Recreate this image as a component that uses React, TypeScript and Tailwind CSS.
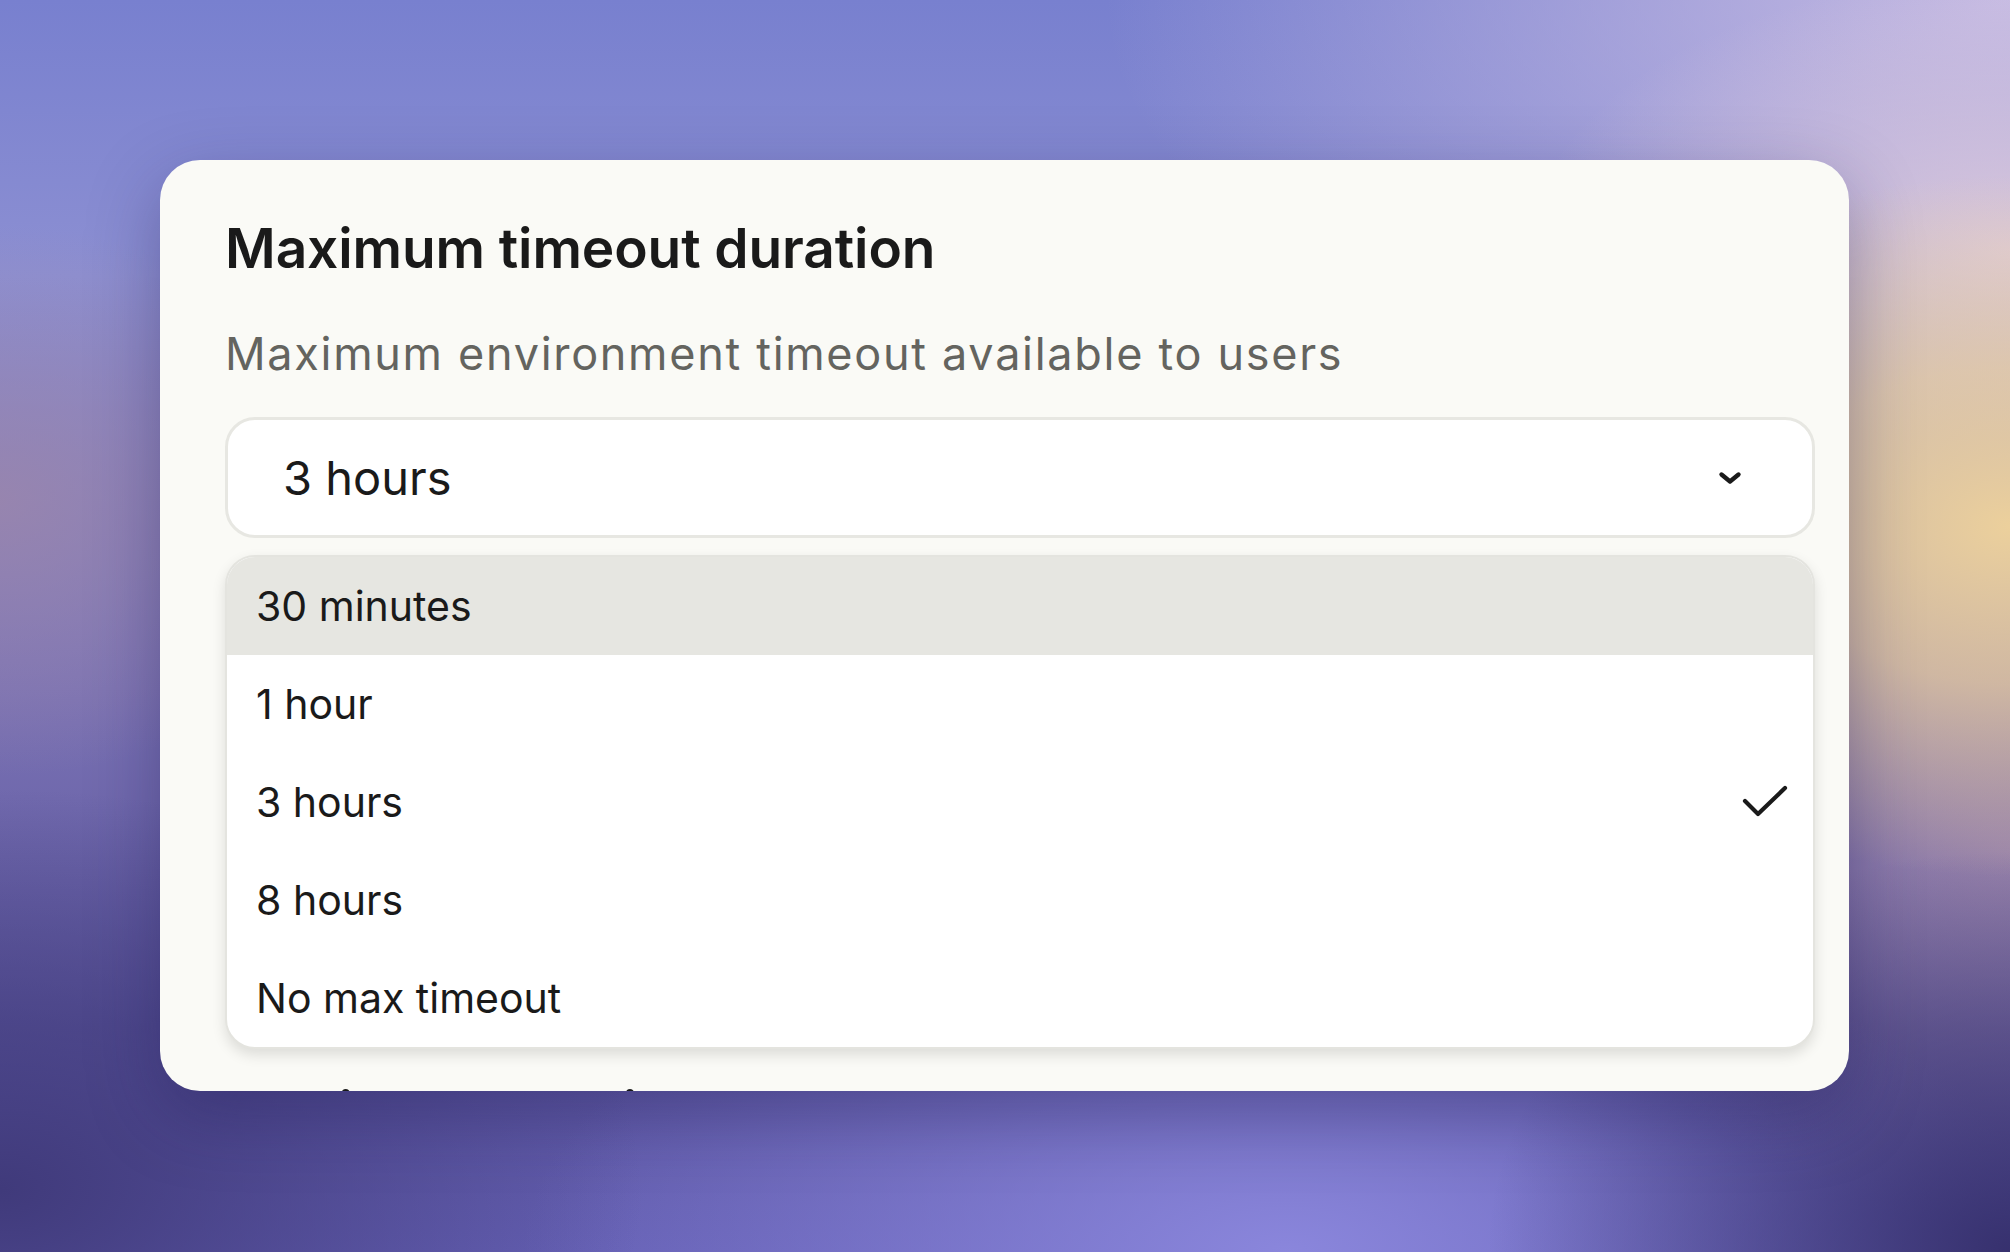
import React from "react";

const options = ["30 minutes", "1 hour", "3 hours", "8 hours", "No max timeout"];

function Chevron() {
  return (
    <svg width="26" height="16" viewBox="0 0 26 16" fill="none">
      <path d="M4.5 4.5 L13 11.5 L21.5 4.5" stroke="#1a1a1a" strokeWidth="4.4" strokeLinecap="round" strokeLinejoin="round" />
    </svg>
  );
}

function Check() {
  return (
    <svg width="48" height="38" viewBox="0 0 48 38" fill="none">
      <path d="M4 18 L17 31 L44 5" stroke="#1a1a1a" strokeWidth="4.2" strokeLinecap="round" strokeLinejoin="round" />
    </svg>
  );
}

export default function App() {
  return (
    <div
      className="relative w-[2010px] h-[1252px] overflow-hidden pt-[160px] pl-[160px] bg-[radial-gradient(ellipse_26%_28%_at_100%_42%,rgba(236,208,156,1)_0%,rgba(236,208,156,0.7)_45%,rgba(236,208,156,0)_100%),radial-gradient(ellipse_24%_22%_at_100%_20%,rgba(224,204,220,0.9)_0%,rgba(224,204,220,0)_100%),radial-gradient(ellipse_45%_35%_at_100%_0%,rgba(202,190,228,0.95)_0%,rgba(202,190,228,0)_100%),radial-gradient(ellipse_32%_32%_at_0%_95%,rgba(62,56,120,0.95)_0%,rgba(62,56,120,0)_100%),radial-gradient(ellipse_26%_32%_at_100%_100%,rgba(52,46,106,0.95)_0%,rgba(52,46,106,0)_100%),radial-gradient(ellipse_38%_28%_at_64%_100%,rgba(140,136,222,0.95)_0%,rgba(140,136,222,0)_100%),radial-gradient(ellipse_18%_22%_at_0%_40%,rgba(156,134,170,0.8)_0%,rgba(156,134,170,0)_100%),radial-gradient(ellipse_22%_30%_at_100%_68%,rgba(166,140,170,0.75)_0%,rgba(166,140,170,0)_100%),linear-gradient(180deg,#7880cf_0%,#8c8fd2_22%,#7a72b4_55%,#5c569e_82%,#6560b4_100%)]"
      style={{ fontFamily: "Inter, 'Noto Sans', sans-serif" }}
    >
      <div className="relative w-[1689px] h-[931px] rounded-[40px] bg-[#fafaf6] overflow-hidden shadow-[0_24px_70px_rgba(30,22,80,0.35)] pl-[65px] pr-[34px] pt-[61px]">
        <h1 className="text-[55px] leading-[55px] font-semibold text-[#1a1a1a] tracking-[-0.1px]">
          Maximum timeout duration
        </h1>
        <p className="mt-[55px] text-[45px] leading-[45px] text-[#64645f] tracking-[1.7px]">
          Maximum environment timeout available to users
        </p>
        <div className="relative mt-[41px]">
          <div className="h-[121px] rounded-[30px] border-[3px] border-[#e7e7e2] bg-white flex items-center justify-between pl-[55px] pr-[69px]">
            <span className="text-[47px] leading-[47px] text-[#1a1a1a]">3 hours</span>
            <Chevron />
          </div>

          <div className="mt-[546px] text-[55px] leading-[55px] font-semibold text-[#1a1a1a]">
            Maximum session length
          </div>

          <div className="absolute left-0 right-0 top-[138px] rounded-[30px] border-[2px] border-[#e4e4df] bg-white overflow-hidden shadow-[0_6px_14px_rgba(0,0,0,0.12)]">
            {options.map((o, i) => (
              <div
                key={o}
                className={
                  i === 0
                    ? "h-[98px] flex items-center justify-between pl-[29px] pr-[24px] bg-[#e6e6e1]"
                    : "h-[98px] flex items-center justify-between pl-[29px] pr-[24px]"
                }
              >
                <span className="text-[41px] leading-[41px] text-[#1a1a1a]">{o}</span>
                {o === "3 hours" ? <Check /> : null}
              </div>
            ))}
          </div>
        </div>
      </div>
    </div>
  );
}
